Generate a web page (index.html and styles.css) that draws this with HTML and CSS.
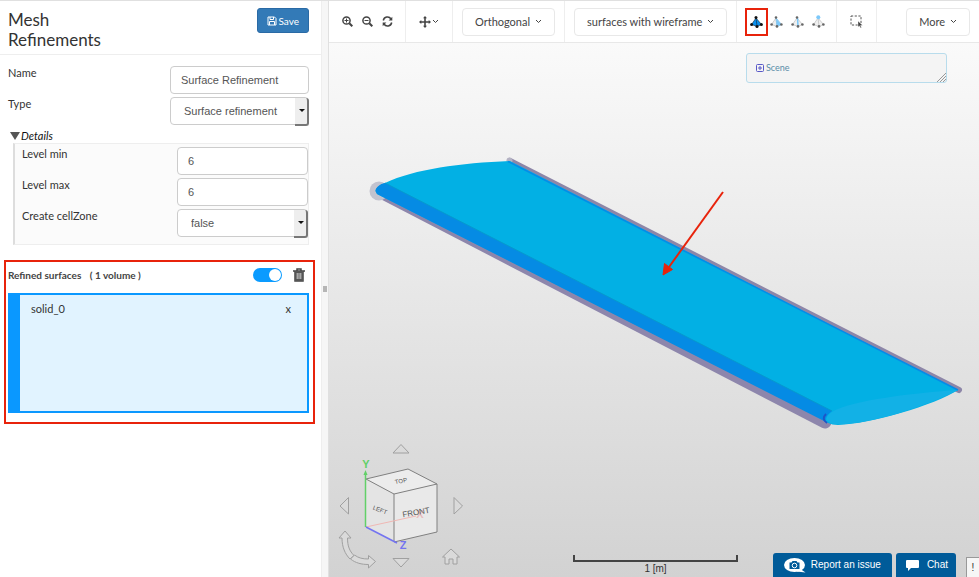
FILE: index.html
```html
<!DOCTYPE html>
<html lang="en">
<head>
<meta charset="utf-8">
<title>Mesh Refinements</title>
<link rel="stylesheet" href="styles.css">
</head>
<body>
<div class="app">
  <aside class="panel">
    <header class="panel-head">
      <h1>Mesh Refinements</h1>
      <button class="save" type="button">
        <svg width="10" height="10" viewBox="0 0 10 10" fill="none" stroke="currentColor"><path d="M1 1h6.500L9 2.500V9H1zM3 1v2.500h3.500V1M2.500 9V5.500h5V9"/></svg>
        <span>Save</span>
      </button>
    </header>
    <form class="form">
      <div class="row">
        <label for="name">Name</label>
        <input class="field" id="name" type="text" value="Surface Refinement">
      </div>
      <div class="row">
        <label for="type">Type</label>
        <div class="pick"><select class="field" id="type"><option>Surface refinement</option></select></div>
      </div>
      <details open>
        <summary>Details</summary>
        <div class="details-body">
          <div class="row">
            <label for="min">Level min</label>
            <input class="field" id="min" type="text" value="6">
          </div>
          <div class="row">
            <label for="max">Level max</label>
            <input class="field" id="max" type="text" value="6">
          </div>
          <div class="row">
            <label for="zone">Create cellZone</label>
            <div class="pick"><select class="field" id="zone"><option>false</option></select></div>
          </div>
        </div>
      </details>
    </form>
    <section class="surfaces">
      <div class="surfaces-head">
        <h2>Refined surfaces <span>( 1 volume )</span></h2>
        <input class="switch" type="checkbox" checked aria-label="Pick surfaces">
        <button class="icon-btn" type="button" aria-label="Delete all">
          <svg width="12" height="14" viewBox="0 0 12 14"><path fill="none" stroke="#444" stroke-width="1.500" d="M4 2.500V1h4v1.500M0 3h12M2 3.500v9.500h8V3.500"/><path d="M2 3h8v10H2z" fill="#555"/><path d="M4.200 5v6M6 5v6M7.800 5v6" stroke="#ccc"/></svg>
        </button>
      </div>
      <ul class="picked">
        <li><span>solid_0</span><button type="button" aria-label="Remove solid_0">x</button></li>
      </ul>
    </section>
  </aside>

  <div class="splitter">
    <svg width="4" height="6" viewBox="0 0 4 6"><path d="M1 0v6M3 0v6" stroke="#777" fill="none"/></svg>
  </div>

  <main class="viewer">
    <nav class="toolbar">
      <div class="group zooms">
        <button class="icon-btn" type="button" aria-label="Zoom in"><svg width="11" height="11" viewBox="0 0 11 11" fill="none" stroke="#444"><circle cx="4.500" cy="4.500" r="3.600" stroke-width="1.500"/><path d="M7.300 7.300l3 3" stroke-width="2"/><path d="M2.500 4.500h4M4.500 2.500v4"/></svg></button>
        <button class="icon-btn" type="button" aria-label="Zoom out"><svg width="11" height="11" viewBox="0 0 11 11" fill="none" stroke="#444"><circle cx="4.500" cy="4.500" r="3.600" stroke-width="1.500"/><path d="M7.300 7.300l3 3" stroke-width="2"/><path d="M2.500 4.500h4"/></svg></button>
        <button class="icon-btn" type="button" aria-label="Reset view"><svg width="11" height="11" viewBox="0 0 11 11"><path d="M1.300 4.500A4.200 4.200 0 0 1 9 3M9.700 6.500A4.200 4.200 0 0 1 2 8" fill="none" stroke="#444" stroke-width="1.500"/><path d="M10.300.8v3.700H6.600zM.7 10.200V6.500h3.700z" fill="#444"/></svg></button>
      </div>
      <div class="group moves">
        <button class="icon-btn" type="button" aria-label="Move">
          <svg width="12" height="12" viewBox="0 0 12 12" fill="#444"><path d="M6 0l2 2.300H6.800v2.900h2.900V4L12 6 9.700 8V6.800H6.800v2.900H8L6 12 4 9.700h1.200V6.800H2.300V8L0 6l2.300-2v1.200h2.900V2.300H4z"/></svg>
          <svg class="chev" width="7" height="5" viewBox="0 0 7 5"><path d="M1 1l2.500 2.500L6 1"/></svg>
        </button>
      </div>
      <div class="group"><button class="drop" type="button">Orthogonal <svg class="chev" width="7" height="5" viewBox="0 0 7 5"><path d="M1 1l2.500 2.500L6 1"/></svg></button></div>
      <div class="group"><button class="drop" type="button">surfaces with wireframe <svg class="chev" width="7" height="5" viewBox="0 0 7 5"><path d="M1 1l2.500 2.500L6 1"/></svg></button></div>
      <div class="group filters">
        <button class="icon-btn active" type="button" aria-label="Pick volumes"><svg width="13" height="13" viewBox="0 0 13 13"><path d="M6 3L1.500 9.500l5.500 2L11.500 9.500z" fill="#0a90ee" stroke="#123" stroke-width=".6"/><path d="M6 3L7 11" stroke="#123" stroke-width=".6"/><g fill="#111"><circle cx="6" cy="2.500" r="1.500"/><circle cx="1.600" cy="9.500" r="1.500"/><circle cx="7" cy="11.400" r="1.500"/><circle cx="11.400" cy="9.500" r="1.500"/></g></svg></button>
        <button class="icon-btn" type="button" aria-label="Pick faces"><svg width="13" height="13" viewBox="0 0 13 13"><path d="M6 3L1.500 9.500l5.500 2z" fill="#eee" stroke="#bbb" stroke-width=".7"/><path d="M6 3L7 11.500 11.500 9.500z" fill="#7cc8fa" stroke="#8cc8ee"/><g fill="#666"><circle cx="6" cy="2.500" r="1.300"/><circle cx="1.600" cy="9.500" r="1.300"/><circle cx="7" cy="11.400" r="1.300"/><circle cx="11.400" cy="9.500" r="1.300"/></g></svg></button>
        <button class="icon-btn" type="button" aria-label="Pick edges"><svg width="13" height="13" viewBox="0 0 13 13"><path d="M6 3L1.500 9.500l5.500 2L11.500 9.500z" fill="#f0f0f0" stroke="#bbb" stroke-width=".7"/><path d="M6.500 3L7 11" stroke="#7cc8fa" stroke-width="1.500"/><g fill="#666"><circle cx="6" cy="2.500" r="1.300"/><circle cx="1.600" cy="9.500" r="1.300"/><circle cx="7" cy="11.400" r="1.300"/><circle cx="11.400" cy="9.500" r="1.300"/></g></svg></button>
        <button class="icon-btn" type="button" aria-label="Pick vertices"><svg width="13" height="13" viewBox="0 0 13 13"><path d="M6 3L1.500 9.500l5.500 2L11.500 9.500z" fill="#f0f0f0" stroke="#bbb" stroke-width=".7"/><path d="M6 3L7 11" stroke="#bbb" stroke-width=".7"/><g fill="#666"><circle cx="1.600" cy="9.500" r="1.300"/><circle cx="7" cy="11.400" r="1.300"/><circle cx="11.400" cy="9.500" r="1.300"/></g><circle cx="6.300" cy="2.300" r="2" fill="#7cc8fa"/></svg></button>
      </div>
      <div class="group boxsel"><button class="icon-btn" type="button" aria-label="Box selection"><svg width="13" height="13" viewBox="0 0 13 13"><path d="M1 1h10v9H1z" fill="none" stroke="#555" stroke-dasharray="2.200 1.500"/><path d="M8 6l4.500 4.200-2 .2 1 2-1 .5-1-2L8 12z" fill="#444" stroke="#fff" stroke-width=".4"/></svg></button></div>
      <div class="group more"><button class="drop" type="button">More <svg class="chev" width="7" height="5" viewBox="0 0 7 5"><path d="M1 1l2.500 2.500L6 1"/></svg></button></div>
    </nav>

    <div class="canvas">
      <svg class="model" viewBox="329 43 650 534" preserveAspectRatio="xMidYMid meet">
        <path d="M379 191L825 422" stroke="#8d86ac" stroke-width="13" stroke-linecap="round"/>
        <circle cx="379" cy="191" r="9.500" fill="#c2c3cf"/>
        <path d="M510 161L959 390" stroke="#8d86a8" stroke-width="6" stroke-linecap="round"/>
        <circle cx="509.500" cy="160.500" r="3" fill="#b4b2c3"/>
        <path d="M375.500 191C376 187 380 185 385 183C415 169 460 163 510 161L958 390C935 405 870 424 838 425C830 425 826 422 820 418L377 194Z" fill="#02b0e4"/>
        <path d="M508 161.500L958 390" stroke="#058be8" stroke-width="1.500"/>
        <path d="M375.500 191C376 187 380 184 385 183L832 411Q824 417 826 422L377 194Z" fill="#058be4"/>
        <path d="M385 183L832 411" stroke="#0799cd" stroke-width="1"/>
        <path d="M826 414Q821 419 827 423" fill="none" stroke="#1d56c8" stroke-width="2"/>
        <path d="M958 390C915 393 851 400 832 412C824 417 825 423 835 424C865 426 925 407 958 390Z" fill="#12b1e6"/>
        <path d="M723 192L669 267" stroke="#e8230b" stroke-width="2"/>
        <path d="M663 275l1.500-11.500 8 6z" fill="#e8230b" stroke="#e8230b"/>
      </svg>

      <div class="tree"><svg width="8" height="8" viewBox="0 0 8 8" fill="none" stroke="#5858c8"><rect x=".5" y=".5" width="7" height="7" rx="1"/><path d="M2 4h4M4 2v4"/></svg><span>Scene</span>
        <svg class="grip" width="9" height="9" viewBox="0 0 9 9"><path d="M0 9l9-9M3 9l6-6M6 9l3-3" stroke="#999"/></svg></div>

      <svg class="cube" width="150" height="142" viewBox="330 435 150 142">
        <path d="M366 479l42-10 29 15-43 10z" fill="#ececec"/><path d="M366 479l28 15v48l-28-15z" fill="#e4e4e4"/><path d="M394 494l43-10v48l-43 10z" fill="#e9e9e9"/>
        <path d="M366 479l42-10 29 15v48l-43 10V494zM394 494l43-10" fill="none" stroke="#808080"/>
        <path d="M366 527l50-11" stroke="#f0b8b4"/>
        <path d="M365.500 527v-54" stroke="#62d068" stroke-width="1.500"/><path d="M365.500 470l2 5h-4z" fill="#62d068"/>
        <path d="M366 527l31 16" stroke="#7474f0" stroke-width="1.500"/>
        <text class="axis" x="420" y="518" fill="#e8a8a8" fill-opacity=".7">X</text>
        <text class="face" x="416" y="515" transform="rotate(-10 416 512)" font-size="8">FRONT</text>
        <text class="face" x="380" y="512" transform="rotate(20 380 510)" font-size="6">LEFT</text>
        <text class="face" x="401" y="483" transform="rotate(-10 401 481)" font-size="6">TOP</text>
        <text class="axis" x="366" y="468" fill="#62d068">Y</text><text class="axis" x="403" y="549" fill="#7474f0">Z</text>
        <g fill="#dadada" stroke="#a0a0a0"><path d="M401 444.500l8 8.500h-16zM401 567l8-8.500h-16zM340 506l8.500-8.500v16.500zM462.500 506l-8.500-8.500v16.500z"/><path d="M345 531l6 7h-3.500c0 8 2 13 6.500 17.500l-4 3.500c-5-5-8-12-8-21h-3z"/><path d="M375.500 561.500l-7 6.500v-3.500c-7 0-13-1.500-18-5.500l4-4c4 3 8 4 14 4v-3.500z"/><path d="M451 549l8.500 8h-2.500v7h-4v-5h-4v5h-4v-7h-2.500z"/></g>
      </svg>

      <div class="scale"><span>1 [m]</span></div>

      <div class="support">
        <button class="help" type="button"><svg width="22" height="15" viewBox="0 0 22 15"><ellipse cx="10.500" cy="7" rx="10.500" ry="7" fill="#fff"/><path d="M15 10l6.500 4.500-9-1z" fill="#fff"/><path d="M5.500 4.500h2l1-1.500h4l1 1.500h2v6.500h-10z" fill="#005b99"/><circle cx="10.500" cy="7.500" r="2.300" fill="#005b99" stroke="#fff"/></svg><span>Report an issue</span></button>
        <button class="help" type="button"><svg width="13" height="12" viewBox="0 0 13 12"><path d="M1 1h11a1 1 0 0 1 1 1v6a1 1 0 0 1-1 1H5l-3 3V9H1a1 1 0 0 1-1-1V2a1 1 0 0 1 1-1z" fill="#fff"/></svg><span>Chat</span></button>
        <button class="alert" type="button">!</button>
      </div>
    </div>
  </main>
</div>
</body>
</html>
```

FILE: styles.css
```css
* { box-sizing: border-box; }
body { margin: 0; font: 11px/16px Lato, "Liberation Sans", sans-serif; color: #333; }
button { font: inherit; color: inherit; border: 0; background: none; padding: 0; cursor: pointer; }
svg { display: block; flex: none; }

.app { display: grid; grid-template-columns: 321px 8px minmax(0, 1fr); min-height: 100vh; border-top: 1px solid #e0e0e0; }

.panel { background: #fff; }
.panel-head { display: flex; justify-content: space-between; align-items: flex-start; padding: 7px 12px 4px 8px; border-bottom: 1px solid #eee; }
h1 { margin: 2px 0 0; max-width: 120px; font-size: 17px; line-height: 20px; font-weight: 400; }
.save { display: flex; align-items: center; gap: 1px; height: 25px; padding: 0 9px; border: 1px solid #2a6aa5; border-radius: 3px; background: #337ab7; color: #fff; font-size: 10px; }

.form { padding: 11px 12px 0 8px; }
.row { display: grid; grid-template-columns: minmax(0, 1fr) 139px; height: 31px; }
.row label { line-height: 14px; }
.field { width: 100%; height: 28px; padding: 0 10px; border: 1px solid #ccc; border-radius: 4px; background: #fff; color: #555; font: 11px "Liberation Sans", sans-serif; outline: 0; }
select.field { appearance: none; padding-left: 13px; }
.pick { position: relative; }
.pick::before { content: ""; position: absolute; right: 0; top: 1px; width: 12px; height: 26px; background: #eee; border-right: 2px solid #777; border-bottom: 2px solid #777; border-radius: 0 3px 3px 0; }
.pick::after { content: ""; position: absolute; right: 4px; top: 12px; border: 3px solid transparent; border-top-color: #111; border-bottom: 0; }
details { padding: 1px 0 0 5px; }
summary { display: flex; align-items: center; gap: 1px; height: 14px; margin-left: -3px; font-style: italic; color: #111; }
summary::before { content: ""; border: 5px solid transparent; border-top: 8px solid #555; border-bottom: 0; }
.details-body { padding: 3px 0 4px 7px; border: 1px solid #eee; border-left: 2px solid #ddd; background: #fbfbfb; }
.details-body .row { grid-template-columns: minmax(0, 1fr) 131px; }

.surfaces { margin: 15px 6px 0 4px; padding: 0 4px 9px 2px; border: 2px solid #e8230b; }
.surfaces-head { display: flex; align-items: center; height: 31px; padding: 0 4px 5px 0; }
h2 { flex: 1; margin: 0; font-size: 10px; font-weight: 700; color: #444; }
h2 span { margin-left: 6px; }
.switch { appearance: none; display: flex; width: 29px; height: 14px; margin: 0 11px 0 0; padding: 1px; border-radius: 7px; background: #0a9bff; justify-content: flex-end; }
.switch::before { content: ""; width: 12px; height: 12px; border-radius: 6px; background: #fff; }
.switch:not(:checked) { justify-content: flex-start; background: #bbb; }
.picked { list-style: none; margin: 0; min-height: 120px; padding: 6px 16px 0 11px; border: 2px solid #0a98ff; border-left-width: 12px; background: #e1f3ff; }
.picked li { display: flex; justify-content: space-between; }

.splitter { display: flex; align-items: center; justify-content: center; background: #f6f6f6; border-left: 1px solid #eee; border-right: 1px solid #e0e0e0; }

.viewer { display: flex; flex-direction: column; }
.toolbar { display: flex; height: 42px; background: #fff; border-bottom: 1px solid #e8e8e8; }
.group { display: flex; align-items: center; padding: 0 9px; border-right: 1px solid #eee; }
.zooms { gap: 9px; padding: 0 12px 0 13px; }
.moves { padding: 0 13px; }
.moves .icon-btn { display: flex; align-items: center; gap: 1px; }
.drop { display: flex; align-items: center; gap: 5px; height: 28px; padding: 0 12px; border: 1px solid #e8e8e8; border-radius: 4px; white-space: nowrap; color: #444; }
.chev { fill: none; stroke: #444; }
.filters { gap: 8px; padding: 0 11px 0 8px; }
.filters .active { height: 28px; padding: 0 3px; border: 2px solid #e8230b; margin-right: -6px; }
.boxsel { padding: 0 13px; }
.more { flex: 1; justify-content: flex-end; border: 0; }

.canvas { position: relative; flex: 1; overflow: hidden; background: linear-gradient(#fafafa, #d2d2d2); }
.model { position: absolute; inset: 0; width: 100%; height: 100%; }
.tree { position: absolute; top: 10px; right: 32px; width: 201px; height: 30px; display: flex; align-items: center; gap: 2px; padding-left: 9px; border: 1px solid #b8dcec; border-radius: 3px; background: #f4f4f4; color: #5a8ca8; font-size: 9px; }
.grip { position: absolute; right: 0; bottom: 0; }
.cube { position: absolute; left: 1px; bottom: 0; }
.cube text { text-anchor: middle; }
.face { font-family: "Liberation Sans Narrow", "Liberation Sans", sans-serif; fill: #555; }
.axis { font: bold 11px "Liberation Sans", sans-serif; }
.scale { position: absolute; right: 241px; bottom: 2px; width: 165px; height: 20px; text-align: center; font: 10px/14px "Liberation Sans", sans-serif; }
.scale::before { content: ""; display: block; height: 5px; border: 2px solid #444; border-top: 0; }
.support { position: absolute; right: 0; bottom: 0; display: flex; align-items: flex-end; gap: 4px; font: 10px/14px "Liberation Sans", sans-serif; }
.help { display: flex; align-items: center; gap: 5px; height: 24px; padding: 0 11px; border-radius: 3px 3px 0 0; background: #005b99; color: #fff; }
.help + .help { gap: 8px; padding: 0 8px 0 10px; }
.alert { width: 13px; height: 20px; margin-left: 6px; border: 1px solid #999; border-width: 1px 0 0 1px; background: #f6f6f6; }
```
